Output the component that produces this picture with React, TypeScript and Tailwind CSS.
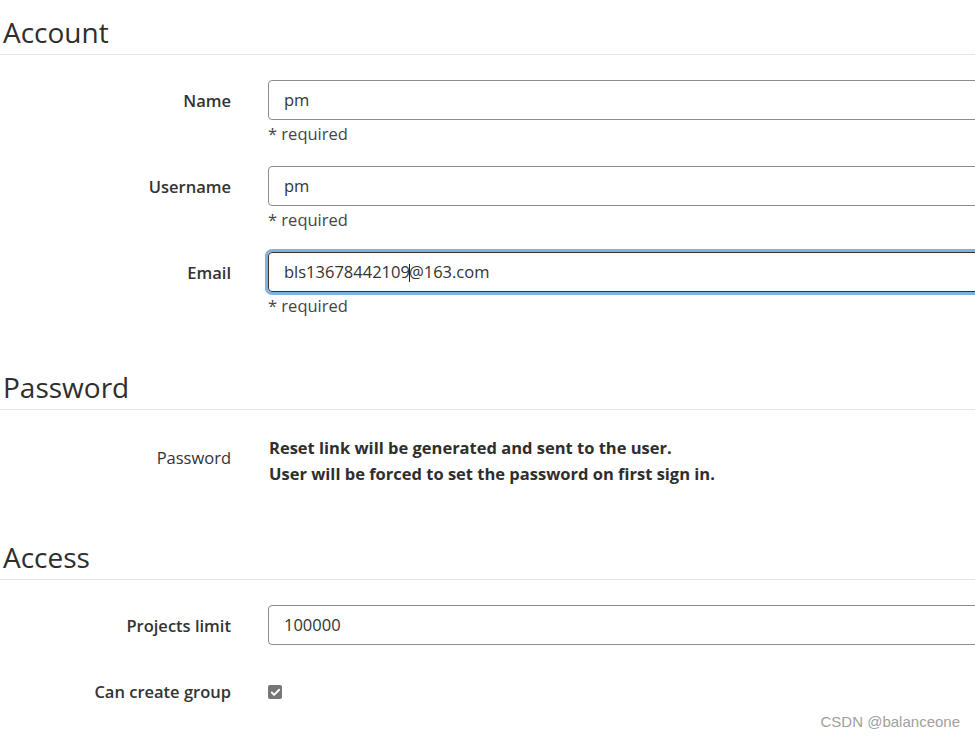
import { Check } from "lucide-react";

const font = { fontFamily: '"Open Sans", "Noto Sans", sans-serif' };

function SectionTitle({ title, top }: { title: string; top: string }) {
  return (
    <h2
      className={`${top} pb-[5px] pl-[3px] border-b border-[#e5e5e5] text-[28px] leading-[34px] font-normal text-[#2e2e2e]`}
    >
      {title}
    </h2>
  );
}

function Field({
  label,
  value,
  focused,
  required,
}: {
  label: string;
  value: string;
  focused?: boolean;
  required?: boolean;
}) {
  return (
    <div className="flex">
      <div className="w-[231px] shrink-0 h-[40px] pt-[2px] flex items-center justify-end text-[16.5px] font-semibold text-[#333]">
        {label}
      </div>
      <div className="ml-[37px] shrink-0 w-[720px]">
        <div
          className={
            focused
              ? "w-[720px] h-[40px] flex items-center px-[15px] rounded-[4px] border border-[#333] ring-[3px] ring-[#7fb0e4] text-[16.5px] text-[#333]"
              : "w-[720px] h-[40px] flex items-center px-[15px] rounded-[4px] border border-[#8c8c8c] text-[16.5px] text-[#333]"
          }
        >
          {focused ? (
            <span>
              bls13678442109
              <span className="inline-block w-px h-[18px] bg-[#222] align-middle -mx-px" />
              @163.com
            </span>
          ) : (
            value
          )}
        </div>
        {required && (
          <div className="h-[26px] leading-[28px] text-[16.5px] text-[#444]">* required</div>
        )}
      </div>
    </div>
  );
}

export default function App() {
  return (
    <div
      className="relative w-[975px] h-[739px] overflow-hidden bg-white"
      style={font}
    >
      <SectionTitle title="Account" top="pt-[15px]" />

      <div className="mt-[25px] flex flex-col gap-[20px]">
        <Field label="Name" value="pm" required />
        <Field label="Username" value="pm" required />
        <Field label="Email" value="" focused required />
      </div>

      <SectionTitle title="Password" top="mt-[52px]" />

      <div className="mt-[25px] flex">
        <div className="w-[231px] shrink-0 pt-[10px] text-right text-[16.5px] leading-[26px] text-[#333]">
          Password
        </div>
        <div className="ml-[38px] text-[16.5px] leading-[26px] font-bold text-[#2e2e2e]">
          <p>Reset link will be generated and sent to the user.</p>
          <p>User will be forced to set the password on first sign in.</p>
        </div>
      </div>

      <SectionTitle title="Access" top="mt-[53px]" />

      <div className="mt-[25px]">
        <Field label="Projects limit" value="100000" />
      </div>

      <div className="mt-[34px] flex items-center">
        <div className="w-[231px] shrink-0 text-right text-[16.5px] leading-[26px] font-semibold text-[#333]">
          Can create group
        </div>
        <div className="ml-[37px] w-[14px] h-[14px] rounded-[2px] bg-[#767676] flex items-center justify-center">
          <Check className="w-[11px] h-[11px] text-white" strokeWidth={4} />
        </div>
      </div>

      <div className="absolute right-[15px] bottom-[6px] text-[15px] text-[#a0a0a0] font-['Liberation_Sans',sans-serif]">
        CSDN @balanceone
      </div>
    </div>
  );
}
